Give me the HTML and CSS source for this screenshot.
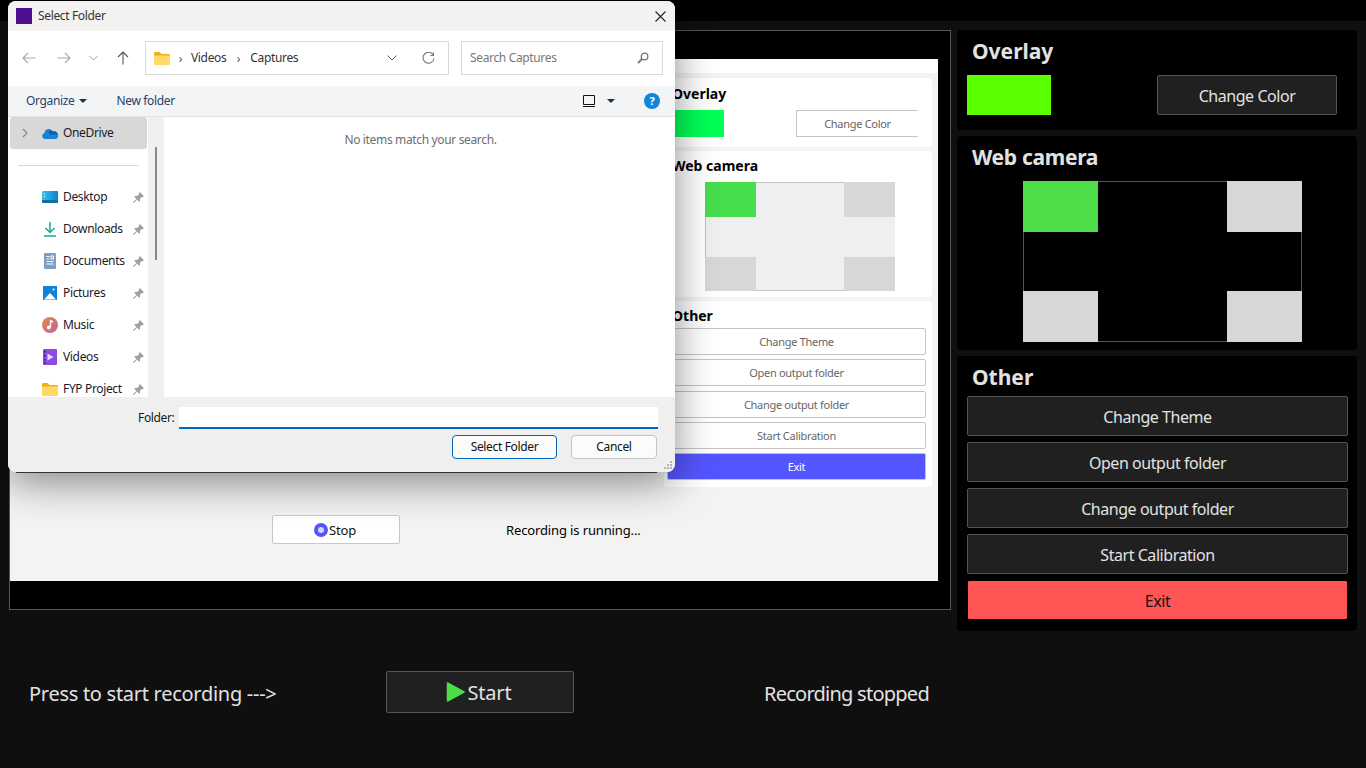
FILE: index.html
```html
<!DOCTYPE html>
<html lang="en">
<head>
    <meta charset="UTF-8">
    <title>Recorder</title>
    <link rel="stylesheet" href="styles.css">
</head>
<body>
<svg class="defs" width="0" height="0">
    <defs>
        <linearGradient id="desk" x1="0" y1="0" x2="1" y2="0"><stop offset="0" stop-color="#35c6e8"/><stop offset="1" stop-color="#1280c8"/></linearGradient>
        <linearGradient id="mus" x1="0" y1="0" x2="1" y2="1"><stop offset="0" stop-color="#ee8a4a"/><stop offset="1" stop-color="#c0609c"/></linearGradient>
    </defs>
    <symbol id="pin" viewBox="0 0 12 12"><path d="M7.500 0L12 4.500l-1.200 1-.9-.3-2.300 2.300.2 2-1 1-2.300-2.300L1 12l-1-1 3.800-3.500L1.500 5.200l1-1 2 .2 2.300-2.300-.3-.9z" fill="#9aa0a6"/></symbol>
    <symbol id="folder" viewBox="0 0 16 14"><path d="M0 2a1 1 0 0 1 1-1h4.500l2 2H15a1 1 0 0 1 1 1v2H0z" fill="#f0ae1a"/><path d="M0 4.500h16V13a1 1 0 0 1-1 1H1a1 1 0 0 1-1-1z" fill="#ffd966"/></symbol>
</svg>
<div class="topbar"></div>

<div class="main">
    <!--video preview-->
    <div class="preview">
        <div class="shot">
            <div class="shot-nav"></div>
            <div class="shot-body">
                <div class="shot-left">
                    <div class="shot-stop">
                        <button class="mini-stop"><span class="stop-dot"></span>Stop</button>
                        <span class="shot-status">Recording is running...</span>
                    </div>
                </div>
                <div class="shot-side">
                    <div class="mini-card mini-overlay">
                        <div class="mini-title">Overlay</div>
                        <div class="mini-row">
                            <div class="mini-swatch"></div>
                            <div class="mini-color">Change Color</div>
                        </div>
                    </div>
                    <div class="mini-card mini-cam-card">
                        <div class="mini-title">Web camera</div>
                        <div class="mini-cam">
                            <div class="green"></div><div></div><div class="grey"></div>
                            <div></div><div></div><div></div>
                            <div class="grey"></div><div></div><div class="grey"></div>
                        </div>
                    </div>
                    <div class="mini-card mini-other">
                        <div class="mini-title">Other</div>
                        <div class="mini-list">
                            <div class="mini-btn">Change Theme</div>
                            <div class="mini-btn">Open output folder</div>
                            <div class="mini-btn">Change output folder</div>
                            <div class="mini-btn">Start Calibration</div>
                            <div class="mini-btn exit">Exit</div>
                        </div>
                    </div>
                </div>
            </div>
        </div>
    </div>

    <!--right column-->
    <div class="side">
        <div class="card overlay-card">
            <h2>Overlay</h2>
            <div class="overlay-row">
                <div class="swatch"></div>
                <button class="btn color-btn">Change Color</button>
            </div>
        </div>
        <div class="card cam-card">
            <h2>Web camera</h2>
            <div class="cam">
                <div class="green"></div><div></div><div class="grey"></div>
                <div></div><div></div><div></div>
                <div class="grey"></div><div></div><div class="grey"></div>
            </div>
        </div>
        <div class="card other-card">
            <h2>Other</h2>
            <div class="other-list">
                <button class="btn">Change Theme</button>
                <button class="btn">Open output folder</button>
                <button class="btn">Change output folder</button>
                <button class="btn">Start Calibration</button>
                <button class="btn exit-btn">Exit</button>
            </div>
        </div>
    </div>
</div>

<!--bottom row-->
<div class="bottom">
    <span class="press">Press to start recording ---&gt;</span>
    <button class="btn start-btn">
        <svg width="20" height="20" viewBox="0 0 20 20"><path d="M1.500 1l16.500 9L1.500 19z" fill="#4cdd48" stroke="#4cdd48" stroke-width="1.500" stroke-linejoin="round"/></svg>Start
    </button>
    <span class="stopped">Recording stopped</span>
</div>

<!--file dialog-->
<div class="dialog">
    <div class="d-title">
        <span class="d-logo"></span>
        <span class="d-name">Select Folder</span>
        <svg class="d-close" width="11" height="11" viewBox="0 0 11 11"><path d="M.5.5l10 10M10.500.5l-10 10" stroke="#222" stroke-width="1.100"/></svg>
    </div>
    <div class="d-tools">
        <svg class="nav-ic back" width="14" height="12" viewBox="0 0 14 12"><path d="M13.500 6H1M6 1L1 6l5 5" fill="none" stroke="#a8a8a8" stroke-width="1.100"/></svg>
        <svg class="nav-ic fwd" width="14" height="12" viewBox="0 0 14 12"><path d="M.5 6H13M8 1l5 5-5 5" fill="none" stroke="#a8a8a8" stroke-width="1.100"/></svg>
        <svg class="nav-ic down" width="9" height="6" viewBox="0 0 9 6"><path d="M.5 1l4 4 4-4" fill="none" stroke="#a8a8a8"/></svg>
        <svg class="nav-ic up" width="12" height="14" viewBox="0 0 12 14"><path d="M6 13.500V1M1 6l5-5 5 5" fill="none" stroke="#555" stroke-width="1.100"/></svg>
        <div class="d-path">
            <svg width="16" height="14"><use href="#folder"/></svg>
            <span class="sep">&rsaquo;</span><span class="d-txt">Videos</span>
            <span class="sep sep2">&rsaquo;</span><span class="d-txt">Captures</span>
            <svg class="path-down" width="10" height="6" viewBox="0 0 10 6"><path d="M.5.5l4.500 4.500 4.500-4.500" fill="none" stroke="#666"/></svg>
            <svg class="path-refresh" width="13" height="13" viewBox="0 0 13 13"><path d="M11 2.500A5.500 5.500 0 1 0 12 6.500M11.500.5v3h-3" fill="none" stroke="#777" stroke-width="1.100"/></svg>
        </div>
        <div class="d-search">
            <span class="d-txt">Search Captures</span>
            <svg width="12" height="12" viewBox="0 0 12 12"><circle cx="7.500" cy="4.500" r="3.300" fill="none" stroke="#777" stroke-width="1.300"/><path d="M5 7l-4 4" stroke="#777" stroke-width="1.800"/></svg>
        </div>
    </div>
    <div class="d-cmd">
        <span class="cmd-item d-txt">Organize</span><span class="caret"></span>
        <span class="cmd-item new d-txt">New folder</span>
        <svg class="view-ic" width="12" height="12" viewBox="0 0 12 12"><path d="M.5.5h11v9H.5z" fill="none" stroke="#111"/><path d="M0 11.500h12" stroke="#111"/></svg>
        <span class="caret view-caret"></span>
        <span class="help">?</span>
    </div>
    <div class="d-body">
        <div class="d-nav">
            <div class="nav-row selected">
                <svg class="expand" width="6" height="10" viewBox="0 0 6 10"><path d="M1 1l4 4-4 4" fill="none" stroke="#888" stroke-width="1.200"/></svg>
                <svg class="nav-file" width="16" height="11" viewBox="0 0 16 11"><path d="M3 11a3 3 0 0 1-.5-5.900A4.500 4.500 0 0 1 11 3.500 3.800 3.800 0 0 1 16 8a3 3 0 0 1-3 3z" fill="#1583d8"/><path d="M6 4a4 4 0 0 1 5-.5A3.800 3.800 0 0 1 15.500 6L8.500 7z" fill="#0f5fb0"/></svg>
                <span>OneDrive</span>
            </div>
            <div class="nav-line"></div>
            <div class="nav-row">
                <svg class="nav-file" width="16" height="12" viewBox="0 0 16 12"><rect width="16" height="12" rx="1" fill="url(#desk)"/><path d="M0 9h16v2a1 1 0 0 1-1 1H1a1 1 0 0 1-1-1z" fill="#0f6fa8"/><path d="M2 2.500h1v1H2zM2 5h1v1H2z" fill="#fff"/></svg>
                <span>Desktop</span><svg class="pin" width="11" height="11"><use href="#pin"/></svg>
            </div>
            <div class="nav-row">
                <svg class="nav-file" width="16" height="15" viewBox="0 0 16 15"><path d="M8 0v10M3.500 6L8 10.500 12.500 6" fill="none" stroke="#19a98c" stroke-width="1.500"/><path d="M2 14h12" stroke="#19a98c" stroke-width="1.500"/></svg>
                <span>Downloads</span><svg class="pin" width="11" height="11"><use href="#pin"/></svg>
            </div>
            <div class="nav-row">
                <svg class="nav-file" width="16" height="16" viewBox="0 0 16 16"><rect x="2" width="12" height="16" rx="1" fill="#7e9fc2"/><path d="M4.500 3.500h3M4.500 6h3M9 3h2.500v3H9zM4.500 8.500h7M4.500 11h7" stroke="#fff" fill="none"/></svg>
                <span>Documents</span><svg class="pin" width="11" height="11"><use href="#pin"/></svg>
            </div>
            <div class="nav-row">
                <svg class="nav-file" width="16" height="14" viewBox="0 0 16 14"><rect width="14" height="14" x="1" fill="#0f84d6"/><path d="M2 13.500l6-6.500 6 6.500z" fill="#fff"/><circle cx="11.500" cy="3.500" r="1" fill="#fff"/></svg>
                <span>Pictures</span><svg class="pin" width="11" height="11"><use href="#pin"/></svg>
            </div>
            <div class="nav-row">
                <svg class="nav-file" width="16" height="16" viewBox="0 0 16 16"><circle cx="8" cy="8" r="8" fill="url(#mus)"/><path d="M8.500 3v7" stroke="#fff" stroke-width="1.300"/><circle cx="6.800" cy="10.500" r="1.900" fill="#fff"/><path d="M8.500 3l2.500 1v1.500L8.500 5z" fill="#fff"/></svg>
                <span>Music</span><svg class="pin" width="11" height="11"><use href="#pin"/></svg>
            </div>
            <div class="nav-row">
                <svg class="nav-file" width="16" height="16" viewBox="0 0 16 16"><rect x="1" width="14" height="16" rx="1" fill="#8e4ae0"/><path d="M5.500 4.500v7l6-3.500z" fill="#e6d9ff"/><path d="M2 2h1.500v1.500H2zM2 6h1.500v1.500H2zM2 10h1.500v1.500H2zM2 13h1.500v1.500H2z" fill="#3d1a80"/></svg>
                <span>Videos</span><svg class="pin" width="11" height="11"><use href="#pin"/></svg>
            </div>
            <div class="nav-row">
                <svg class="nav-file" width="16" height="14"><use href="#folder"/></svg>
                <span>FYP Project</span><svg class="pin" width="11" height="11"><use href="#pin"/></svg>
            </div>
        </div>
        <div class="d-scroll"><div class="d-thumb"></div></div>
        <div class="d-list">No items match your search.</div>
    </div>
    <div class="d-foot">
        <div class="foot-row">
            <label class="d-txt">Folder:</label>
            <div class="foot-input"></div>
        </div>
        <div class="foot-btns">
            <button class="d-btn primary">Select Folder</button>
            <button class="d-btn cancel">Cancel</button>
        </div>
        <svg class="grip" width="9" height="9" viewBox="0 0 9 9"><path d="M6 0h2v2H6zM3 3h2v2H3zM6 3h2v2H6zM0 6h2v2H0zM3 6h2v2H3zM6 6h2v2H6z" fill="#b5b5b5"/></svg>
    </div>
</div>
</body>
</html>
```

FILE: styles.css
```css
*{
    margin: 0;
    padding: 0;
    box-sizing: border-box;
}
html,body{
    height: 100%;
}
body{
    position: relative;
    overflow: hidden;
    background: #0f0f0f;
    font-family: "Noto Sans", "Open Sans", sans-serif;
    color: #e2e2e2;
}
button{
    font-family: inherit;
}
.defs{
    position: absolute;
}
.topbar{
    height: 21px;
    background: #000;
}
.main{
    display: flex;
    gap: 6px;
    padding: 9px 0 0 9px;
}

/* preview */
.preview{
    width: 942px;
    height: 580px;
    padding-top: 28px;
    border: 1px solid #555;
    background: #000;
}
.shot{
    display: flex;
    flex-direction: column;
    width: 928px;
    height: 522px;
    background: #f3f3f3;
    color: #000;
}
.shot-nav{
    height: 14px;
    background: #fff;
}
.shot-body{
    display: flex;
    flex: 1;
}
.shot-left{
    flex: 1;
    padding: 442px 0 0 262px;
}
.shot-stop{
    display: flex;
    align-items: center;
}
.mini-stop{
    display: flex;
    align-items: center;
    justify-content: center;
    width: 128px;
    height: 29px;
    border: 1px solid #c8c8c8;
    border-radius: 2px;
    background: #fff;
    font-size: 13px;
    letter-spacing: -0.2px;
    color: #111;
}
.stop-dot{
    width: 14px;
    height: 14px;
    margin: 0 1px 0 -2px;
    border: 4px solid #5555ff;
    border-radius: 50%;
    background: #d4d4ff;
}
.shot-status{
    margin-left: 106px;
    font-size: 13px;
    letter-spacing: -0.13px;
}
.shot-side{
    display: flex;
    flex-direction: column;
    gap: 4px;
    width: 268px;
    margin-right: 6px;
    padding-top: 5px;
}
.mini-card{
    padding: 0 0 0 3px;
    border-radius: 4px;
    background: #fff;
}
.mini-title{
    padding-left: 5px;
    font-size: 14px;
    font-weight: 700;
    line-height: 20px;
}
.mini-overlay{
    height: 69px;
    padding-top: 6px;
}
.mini-row{
    display: flex;
    justify-content: space-between;
    margin-top: 6px;
    padding-right: 14px;
}
.mini-swatch{
    width: 57px;
    height: 27px;
    background: #00ff55;
}
.mini-color{
    width: 122px;
    height: 27px;
    border: 1px solid #c4c4c4;
    border-right: 0;
    font-size: 11px;
    line-height: 25px;
    letter-spacing: -0.3px;
    text-align: center;
    color: #666;
}
.mini-cam-card{
    height: 146px;
    padding-top: 5px;
}
.mini-cam{
    display: grid;
    grid-template-columns: 51px 1fr 51px;
    grid-template-rows: 35px 1fr 34px;
    width: 190px;
    height: 109px;
    margin: 6px 0 0 38px;
    background: #efefef;
    box-shadow: inset 1px 1px 0 #c4c4c4, inset 0 -1px 0 #c4c4c4;
}
.mini-cam .green{
    background: #45dd4d;
}
.mini-cam .grey{
    background: #d7d7d7;
}
.mini-other{
    height: 186px;
    padding-top: 5px;
}
.mini-list{
    display: flex;
    flex-direction: column;
    gap: 4.25px;
    width: 259px;
    margin-top: 2px;
}
.mini-btn{
    height: 27px;
    border: 1px solid #c4c4c4;
    border-radius: 2px;
    font-size: 11px;
    line-height: 26px;
    letter-spacing: -0.3px;
    text-align: center;
    color: #666;
}
.mini-btn.exit{
    border-color: #c4c4c4;
    background: #5555ff;
    color: #fff;
}

/* right column */
.side{
    display: flex;
    flex-direction: column;
    gap: 6px;
    width: 400px;
}
.card{
    padding: 0 10px;
    border-radius: 4px;
    background: #000;
}
.card h2{
    padding-left: 5px;
    font-size: 21px;
    font-weight: 700;
    line-height: 28px;
}
.btn{
    padding-top: 2px;
    border: 1px solid #555;
    border-radius: 2px;
    background: #202020;
    font-size: 16px;
    letter-spacing: -0.45px;
    color: #e2e2e2;
}
.overlay-card{
    height: 100px;
    padding-top: 7px;
}
.overlay-row{
    display: flex;
    justify-content: space-between;
    margin-top: 10px;
    padding-right: 10px;
}
.swatch{
    width: 84px;
    height: 40px;
    background: #5aff00;
}
.color-btn{
    width: 180px;
    height: 40px;
}
.cam-card{
    height: 214px;
    padding-top: 7px;
}
.cam-card h2{
    letter-spacing: -0.3px;
}
.cam{
    display: grid;
    grid-template-columns: 75px 1fr 75px;
    grid-template-rows: 51px 1fr 51px;
    width: 279px;
    height: 161px;
    margin: 10px 0 0 56px;
    box-shadow: inset 0 0 0 1px #555;
}
.cam .green{
    background: #4cdd48;
}
.cam .grey{
    background: #d7d7d7;
}
.other-card{
    height: 275px;
    padding-top: 7px;
}
.other-list{
    display: flex;
    flex-direction: column;
    gap: 6px;
    width: 381px;
    margin-top: 5px;
}
.other-list .btn{
    height: 40px;
}
.other-list .exit-btn{
    border-color: #000;
    background: #ff5555;
    color: #111;
}

/* bottom */
.bottom{
    display: flex;
    align-items: center;
    margin-top: 40px;
    padding-left: 29px;
    font-size: 20px;
}
.press{
    width: 357px;
    padding-top: 2px;
    letter-spacing: -0.28px;
}
.start-btn{
    display: flex;
    align-items: center;
    justify-content: center;
    width: 188px;
    height: 42px;
    padding-top: 0;
    font-size: 20px;
    letter-spacing: -0.2px;
}
.start-btn svg{
    margin: 0 2px 0 -3px;
}
.stopped{
    margin-left: 190px;
    padding-top: 2px;
    letter-spacing: -0.75px;
}

/* dialog */
.dialog{
    position: absolute;
    top: 1px;
    left: 8px;
    display: flex;
    flex-direction: column;
    width: 667px;
    height: 471px;
    overflow: hidden;
    border-radius: 8px;
    background: #fff;
    box-shadow: -5px 14px 0 -13px #333, 0 10px 40px rgba(0,0,0,0.45);
    font-size: 12px;
    letter-spacing: -0.35px;
    color: #1a1a1a;
}
.d-txt,
.d-name,
.nav-row span{
    margin-top: -2px;
}
.d-title{
    display: flex;
    align-items: center;
    flex: none;
    height: 30px;
    padding: 0 9px 0 8px;
    background: #f3f2f1;
}
.d-logo{
    width: 16px;
    height: 16px;
    background: #4b0f8f;
}
.d-name{
    margin-left: 6px;
    color: #333;
}
.d-close{
    margin-left: auto;
}
.d-tools{
    display: flex;
    align-items: center;
    flex: none;
    height: 55px;
    padding: 0 0 1px 14px;
}
.nav-ic{
    flex: none;
}
.fwd{
    margin-left: 21px;
}
.down{
    margin-left: 18px;
}
.up{
    margin-left: 19px;
}
.d-path{
    display: flex;
    align-items: center;
    width: 304px;
    height: 34px;
    margin-left: 16px;
    padding-left: 8px;
    border: 1px solid #d9d9d9;
    color: #333;
}
.sep{
    width: 21px;
    text-align: center;
    color: #555;
}
.sep2{
    width: 24px;
}
.path-down{
    margin-left: auto;
}
.path-refresh{
    margin: 0 13px 0 25px;
}
.d-search{
    display: flex;
    align-items: center;
    justify-content: space-between;
    width: 202px;
    height: 34px;
    margin-left: 12px;
    padding: 0 13px 0 8px;
    border: 1px solid #d9d9d9;
    color: #777;
}
.d-cmd{
    display: flex;
    align-items: center;
    flex: none;
    height: 31px;
    padding-left: 18px;
    border-bottom: 1px solid #e3e3e3;
    background: #f3f4f6;
}
.cmd-item{
    color: #2a3f66;
}
.caret{
    width: 0;
    height: 0;
    margin-left: 5px;
    border-top: 4px solid #1f2f50;
    border-right: 4px solid transparent;
    border-left: 4px solid transparent;
}
.new{
    margin-left: 29px;
}
.view-ic{
    margin-left: auto;
}
.view-caret{
    margin-left: 12px;
}
.help{
    width: 16px;
    height: 16px;
    margin: 0 15px 0 29px;
    border-radius: 50%;
    background: #0f86d8;
    font-size: 11px;
    font-weight: 700;
    line-height: 16px;
    text-align: center;
    color: #fff;
}
.d-body{
    display: flex;
    flex: none;
    height: 280px;
    overflow: hidden;
}
.d-nav{
    flex: none;
    width: 140px;
    padding-left: 2px;
}
.nav-row{
    display: flex;
    align-items: center;
    height: 32px;
    padding-left: 32px;
}
.nav-row span{
    margin-left: 5px;
    color: #1a1a2a;
}
.nav-file{
    flex: none;
    width: 16px;
}
.nav-row .pin{
    margin-left: auto;
    margin-right: 4px;
}
.nav-row.selected{
    position: relative;
    width: 137px;
    border-radius: 3px;
    background: #d8d8d8;
}
.expand{
    position: absolute;
    left: 12px;
    top: 11px;
}
.nav-line{
    width: 121px;
    height: 1px;
    margin: 16px 0 15px 8px;
    background: #d8d8d8;
}
.d-scroll{
    flex: none;
    width: 16px;
    padding: 30px 0 0 7px;
    background: #f0f0f0;
}
.d-thumb{
    width: 2px;
    height: 113px;
    background: #888;
}
.d-list{
    flex: 1;
    padding-top: 14px;
    padding-left: 2px;
    text-align: center;
    color: #6d6d75;
}
.d-foot{
    position: relative;
    flex: 1;
    padding-top: 10px;
    background: #efefef;
}
.foot-row{
    display: flex;
    align-items: center;
    padding-left: 130px;
}
.foot-row label{
    width: 36px;
    text-align: right;
}
.foot-input{
    width: 479px;
    height: 22px;
    margin-left: 5px;
    border-bottom: 2px solid #0067c0;
    background: #fff;
}
.foot-btns{
    display: flex;
    gap: 14px;
    margin-top: 6px;
    padding-left: 444px;
}
.d-btn{
    height: 24px;
    padding-bottom: 2px;
    border: 1px solid #c4c4c4;
    border-radius: 4px;
    background: #fbfbfb;
    font-size: 12px;
    letter-spacing: -0.35px;
    color: #111;
}
.primary{
    width: 105px;
    border-color: #0067c0;
}
.cancel{
    width: 86px;
}
.grip{
    position: absolute;
    right: 2px;
    bottom: 2px;
}
```
